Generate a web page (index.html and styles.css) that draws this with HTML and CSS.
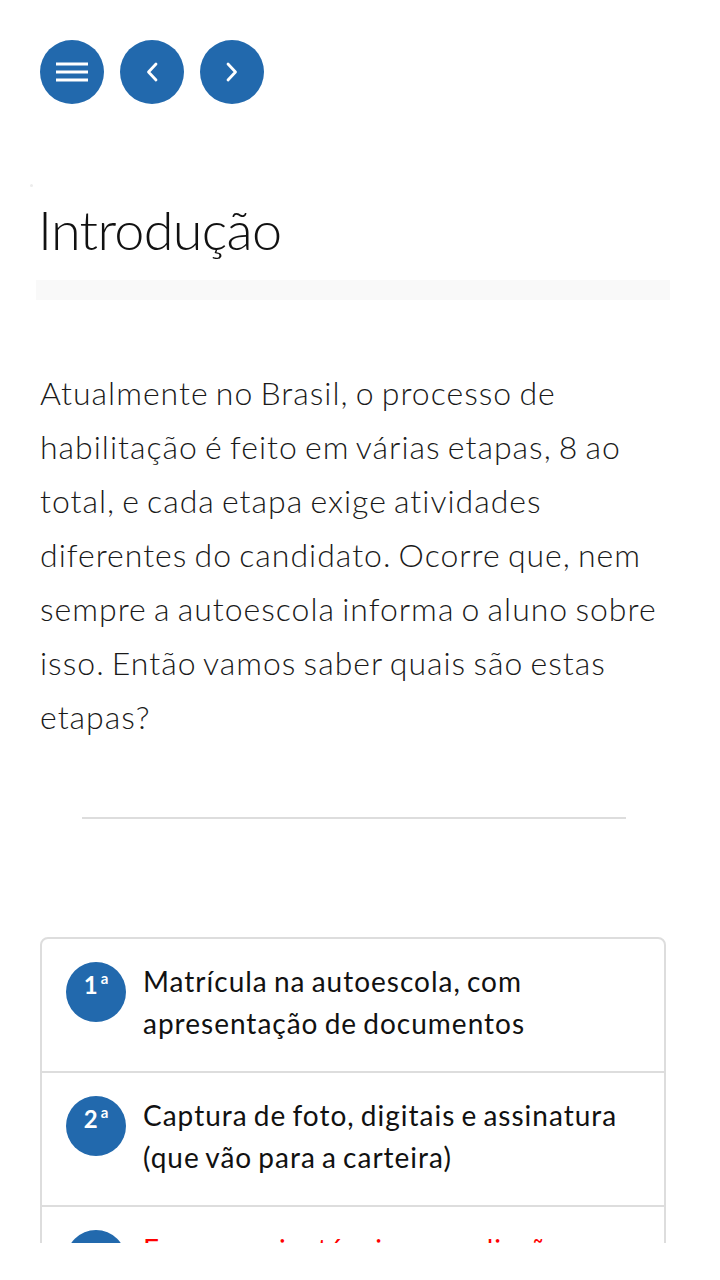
FILE: index.html
```html
<!DOCTYPE html>
<html lang="pt-BR">
<head>
<meta charset="utf-8">
<title>Introdução</title>
<link rel="stylesheet" href="styles.css">
</head>
<body>
<div class="page">
  <nav class="nav">
    <button class="btn" aria-label="Menu">
      <svg width="32" height="24" viewBox="0 0 32 24"><rect x="0" y="2.5" width="32" height="3" fill="#fff"/><rect x="0" y="10.5" width="32" height="3" fill="#fff"/><rect x="0" y="18.5" width="32" height="3" fill="#fff"/></svg>
    </button>
    <button class="btn" aria-label="Anterior">
      <svg width="20" height="20" viewBox="0 0 20 20"><path d="M14 2 L6.5 10 L14 18" fill="none" stroke="#fff" stroke-width="2.8" stroke-linecap="round" stroke-linejoin="round"/></svg>
    </button>
    <button class="btn" aria-label="Próximo">
      <svg width="20" height="20" viewBox="0 0 20 20"><path d="M6 2 L13.5 10 L6 18" fill="none" stroke="#fff" stroke-width="2.8" stroke-linecap="round" stroke-linejoin="round"/></svg>
    </button>
  </nav>
  <div class="dot"></div>
  <h1 class="title">Introdução</h1>
  <div class="title-bar"></div>
  <p class="intro">Atualmente no Brasil, o processo de habilitação é feito em várias etapas, 8 ao total, e cada etapa exige atividades diferentes do candidato. Ocorre que, nem sempre a autoescola informa o aluno sobre isso. Então vamos saber quais são estas etapas?</p>
  <hr class="rule">
  <ol class="steps">
    <li class="step">
      <span class="badge">1<sup>a</sup></span>
      <span class="step-text">Matrícula na autoescola, com apresentação de documentos</span>
    </li>
    <li class="step">
      <span class="badge">2<sup>a</sup></span>
      <span class="step-text">Captura de foto, digitais e assinatura (que vão para a carteira)</span>
    </li>
    <li class="step">
      <span class="badge">3<sup>a</sup></span>
      <span class="step-text step-text--alert">Exames psicotécnico e avaliação médica</span>
    </li>
  </ol>
</div>
</body>
</html>
```

FILE: styles.css
```css
html, body {
  margin: 0;
  padding: 0;
  background: #fff;
}

body {
  font-family: Lato, "Open Sans", "Liberation Sans", sans-serif;
  color: #1a1a1a;
}

.page {
  height: 1243px;
  overflow: hidden;
}

.nav {
  display: flex;
  gap: 16px;
  padding: 40px 40px 0;
}

.btn {
  width: 64px;
  height: 64px;
  border: 0;
  border-radius: 50%;
  background: #2269ad;
  display: flex;
  align-items: center;
  justify-content: center;
  padding: 0;
}

.dot {
  width: 3px;
  height: 3px;
  border-radius: 50%;
  background: #ececec;
  margin: 80px 0 0 30px;
}

.title {
  margin: 11px 0 0 38px;
  font-size: 54px;
  font-weight: 300;
  line-height: 1.2;
  letter-spacing: -0.7px;
  color: #111;
}

.title-bar {
  margin: 17px 50px 0 36px;
  height: 20px;
  background: #f9f9f9;
}

.intro {
  margin: 66px 54px 0 40px;
  font-size: 32px;
  font-weight: 300;
  line-height: 54px;
  letter-spacing: 1px;
  word-spacing: -2.5px;
  color: #1a1a1a;
}

.rule {
  margin: 73px 0 0 82px;
  width: 544px;
  height: 2px;
  border: 0;
  background: #dddddd;
}

.steps {
  list-style: none;
  margin: 118px 54px 0 40px;
  padding: 0;
  border: 2px solid #dddddd;
  border-radius: 8px;
}

.step {
  display: flex;
  align-items: flex-start;
  gap: 17px;
  padding: 21px 24px 27px;
  border-top: 2px solid #dddddd;
}

.step:first-child {
  border-top: 0;
}

.badge {
  flex: 0 0 60px;
  width: 60px;
  height: 60px;
  margin-top: 2px;
  border-radius: 50%;
  background: #2269ad;
  color: #fff;
  font-weight: 700;
  font-size: 24px;
  line-height: 24px;
  text-align: center;
  padding-top: 11px;
  box-sizing: border-box;
}

.badge sup {
  font-size: 15px;
  vertical-align: top;
  line-height: 15px;
  position: relative;
  top: -2px;
  margin-left: 3px;
}

.step-text {
  font-size: 28px;
  line-height: 42px;
  font-weight: 400;
  letter-spacing: 1px;
  word-spacing: -2px;
  color: #111;
}

.step-text--alert {
  color: #ff0000;
}
```
